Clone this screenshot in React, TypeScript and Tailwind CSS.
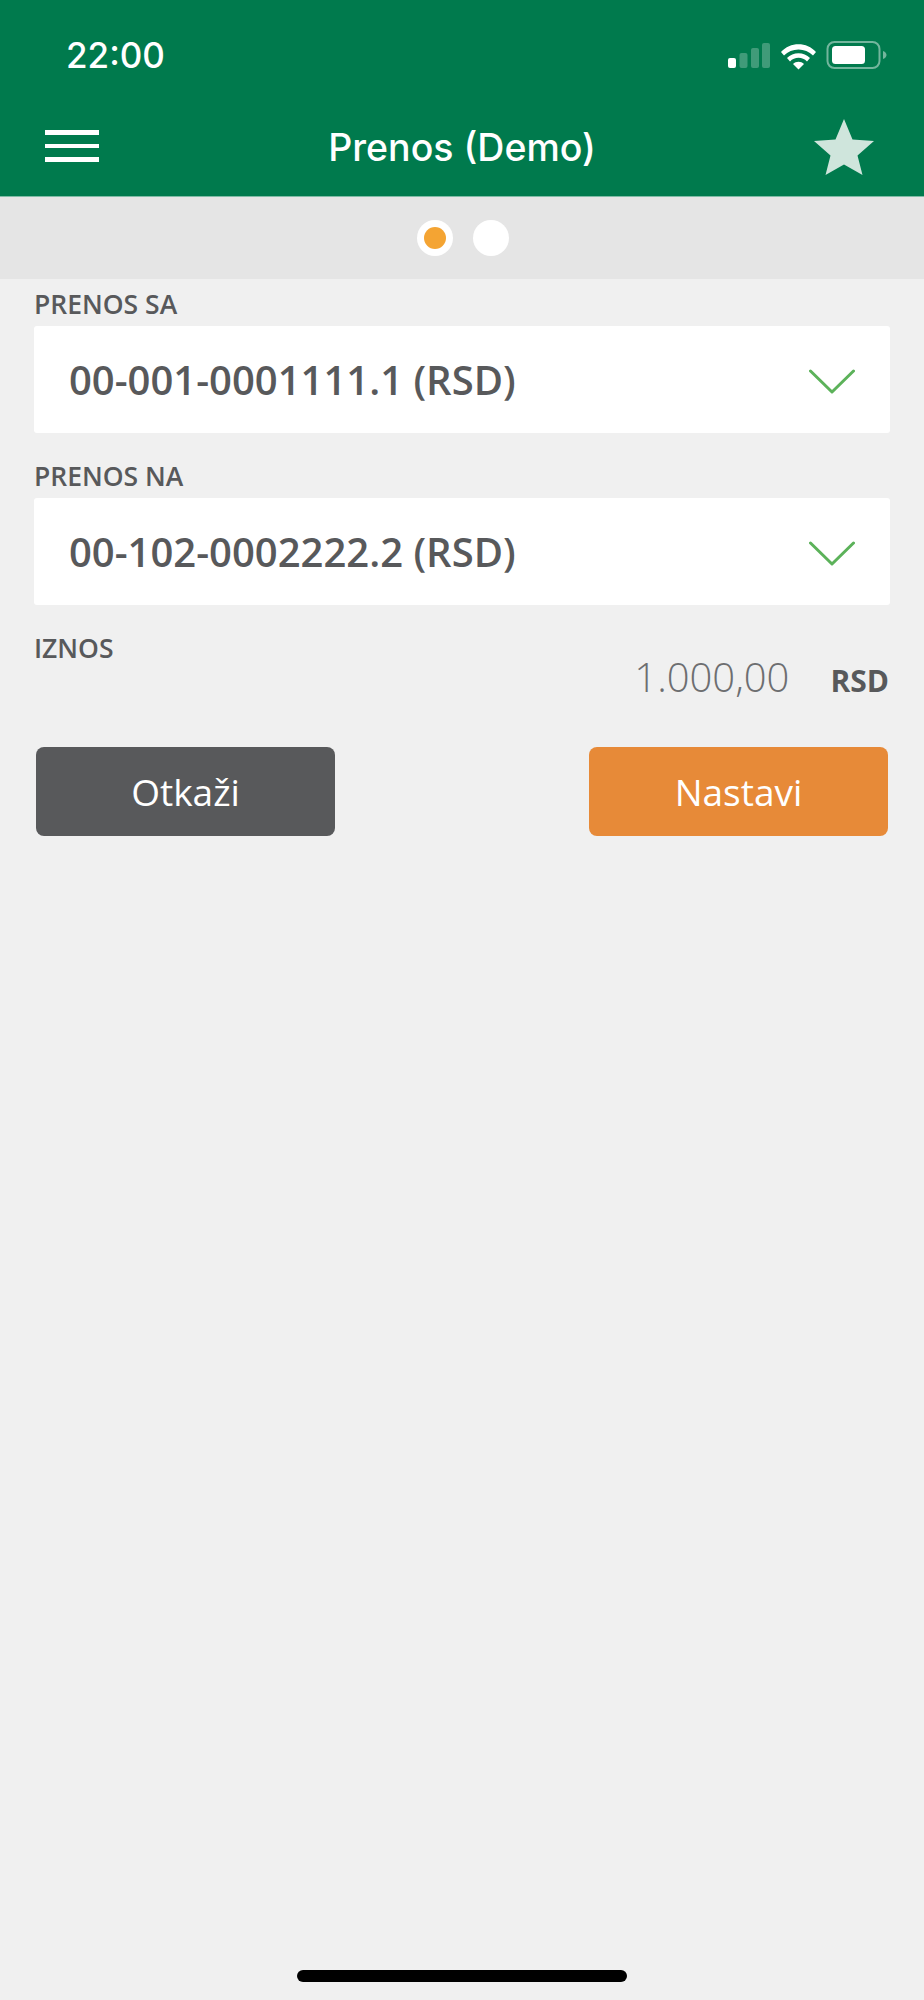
import React from "react";

const openSans = "font-['Open_Sans',sans-serif]";

const StatusIcons = () => (
  <svg width="160" height="30" viewBox="0 0 160 30" className="block">
    <rect x="0" y="17" width="8" height="10" rx="2" fill="#fff" />
    <rect x="11.5" y="12" width="8" height="15" rx="2" fill="#fff" fillOpacity="0.25" />
    <rect x="23" y="7" width="8" height="20" rx="2" fill="#fff" fillOpacity="0.25" />
    <rect x="34" y="2" width="8" height="25" rx="2" fill="#fff" fillOpacity="0.25" />
    <path d="M53 11 C62 0.5 79 0.5 88 11 L85 14.5 C77.5 6.5 63.5 6.5 56 14.5 Z" fill="#fff" />
    <path d="M59 17 C65 10.5 76 10.5 82 17 L79 20.5 C74.5 15.5 66.5 15.5 62 20.5 Z" fill="#fff" />
    <path d="M65 23 C68 20 73 20 76 23 L70.5 28.5 Z" fill="#fff" />
    <rect x="99.5" y="1" width="52" height="26" rx="7" fill="none" stroke="#fff" strokeOpacity="0.45" strokeWidth="2" />
    <rect x="104" y="5" width="33" height="18" rx="3.5" fill="#fff" />
    <path d="M155 10 C157.5 11 158.5 12.5 158.5 14 C158.5 15.5 157.5 17 155 18 Z" fill="#fff" fillOpacity="0.45" />
  </svg>
);

const Chevron = () => (
  <svg width="46" height="25" viewBox="0 0 46 25" className="mt-[4px] block">
    <path d="M1.5 2 L23 23 L44.5 2" fill="none" stroke="#5cb25a" strokeWidth="3" strokeLinecap="round" strokeLinejoin="round" />
  </svg>
);

const AccountField = ({ label, value }: { label: string; value: string }) => (
  <div>
    <p className={`${openSans} pt-[4px] text-[26.5px] leading-[43px] font-semibold text-[#58595b]`}>{label}</p>
    <div className="flex h-[107px] items-center justify-between rounded-[3px] bg-white pl-[35px] pr-[35px]">
      <span className={`${openSans} text-[40px] font-semibold text-[#58595b]`}>{value}</span>
      <Chevron />
    </div>
  </div>
);

export default function App() {
  return (
    <div className="flex min-h-[2000px] flex-col bg-[#f0f0f0]">
      <header className="h-[197px] border-b border-[#7fbca6] bg-[#007a4d] font-['Inter',sans-serif] text-white">
        <div className="flex h-[90px] items-center justify-between pl-[66px] pr-[36px] pt-[21px]">
          <span className="text-[35px] font-medium leading-none">22:00</span>
          <StatusIcons />
        </div>
        <div className="flex h-[106px] items-center justify-between pl-[45px] pr-[50px] pt-[8px]">
          <div className="w-[65px]">
            <div className="flex w-[54px] -translate-y-[1px] flex-col gap-[9px]">
              <span className="h-[4.5px] bg-white" />
              <span className="h-[4.5px] bg-white" />
              <span className="h-[4.5px] bg-white" />
            </div>
          </div>
          <h1 className="pt-[2px] text-[37.5px] font-medium leading-none">Prenos (Demo)</h1>
          <svg width="60" height="56" viewBox="0 0 60 56" className="block">
            <path d="M30 0 L38.5 20.5 L60 22 L43.5 36.5 L48.5 56 L30 45.5 L11.5 56 L16.5 36.5 L0 22 L21.5 20.5 Z" fill="#cfe5dc" />
          </svg>
        </div>
      </header>

      <div className="flex h-[82px] items-center justify-center gap-[20px] bg-[#e5e5e5] pl-[2px]">
        <span className="flex h-[36px] w-[36px] items-center justify-center rounded-full bg-white">
          <span className="h-[22px] w-[22px] rounded-full bg-[#f4a433]" />
        </span>
        <span className="h-[36px] w-[36px] rounded-full bg-white" />
      </div>

      <main className="px-[34px]">
        <div className="flex flex-col gap-[18px]">
          <AccountField label="PRENOS SA" value="00-001-0001111.1 (RSD)" />
          <AccountField label="PRENOS NA" value="00-102-0002222.2 (RSD)" />
        </div>

        <div className={`${openSans} mt-[27px] flex justify-between text-[#58595b]`}>
          <p className="text-[26.5px] font-semibold leading-[32px]">IZNOS</p>
          <div className="flex items-baseline pr-px pt-[21px]">
            <span className="text-[40px] font-light leading-[48px] text-[#6d6e70]">1.000,00</span>
            <span className="ml-[41px] text-[30px] font-bold">RSD</span>
          </div>
        </div>

        <div className={`${openSans} mt-[44px] flex justify-between px-[2px] text-[37px] text-white`}>
          <button className="h-[89px] w-[299px] rounded-[8px] bg-[#58595b]">Otkaži</button>
          <button className="h-[89px] w-[299px] rounded-[8px] bg-[#e78a38]">Nastavi</button>
        </div>
      </main>

      <div className="mt-auto flex justify-center pb-[18px]">
        <span className="h-[12px] w-[330px] rounded-full bg-black" />
      </div>
    </div>
  );
}
